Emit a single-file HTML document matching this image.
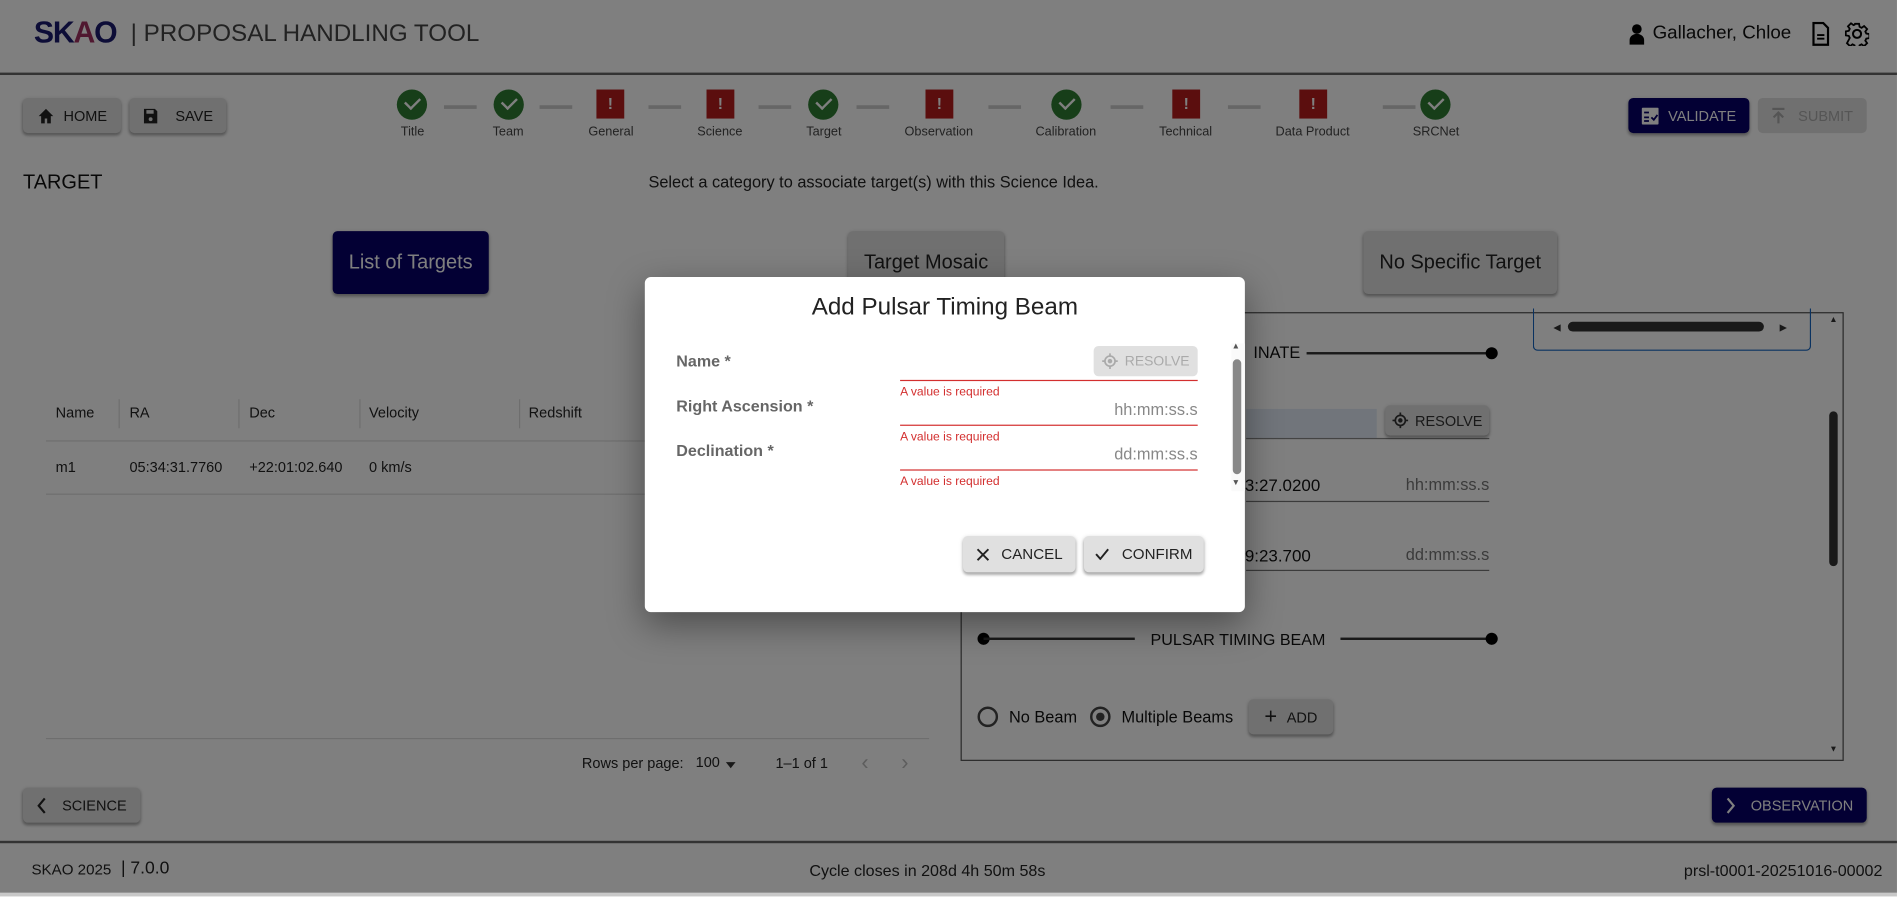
<!DOCTYPE html>
<html><head><meta charset="utf-8">
<style>
*{box-sizing:border-box;margin:0;padding:0}
html,body{width:1897px;height:897px;overflow:hidden;background:#fff;font-family:"Liberation Sans",sans-serif}
#w{position:absolute;left:0;top:0;width:1568px;height:741px;transform:scale(1.2098);transform-origin:0 0;background:#fff;overflow:hidden}
.a{position:absolute}
.btn{position:absolute;background:#e0e0e0;border-radius:4px;box-shadow:0 2px 2px rgba(0,0,0,.25),0 1px 4px rgba(0,0,0,.15);font-size:12px;color:#222;display:flex;align-items:center;justify-content:center;gap:8px}
.nav{background:#070068;color:#fff}
.ok{position:absolute;width:25px;height:25px;border-radius:50%;background:#2e7d32;top:74px}
.ok::after{content:"";position:absolute;left:7px;top:6px;width:10px;height:6px;border-left:2px solid #fff;border-bottom:2px solid #fff;transform:rotate(-45deg)}
.er{position:absolute;width:23px;height:24px;background:#b71c1c;top:74px;color:#fff;font-weight:bold;font-size:13px;text-align:center;line-height:24px}
.sl{position:absolute;top:103px;font-size:10.5px;color:#444;transform:translateX(-50%);white-space:nowrap}
.cn{position:absolute;top:87px;height:3px;background:#ccc}
.t{position:absolute;font-size:12px;color:#222;white-space:nowrap}
.lab{position:absolute;font-size:13.3px;font-weight:bold;color:#666;left:26px}
.ln{position:absolute;left:211px;width:246px;height:1px;background:#d32f2f}
.err{position:absolute;left:211px;font-size:10px;color:#d32f2f}
.ph{position:absolute;right:39px;font-size:13.5px;color:#888}
</style></head><body><div id="w">
<!-- header -->
<div class="a" style="left:28px;top:13px;font-size:25px;font-weight:900;color:#1a1a6e;letter-spacing:-1px">SK<span style="color:#a03060">A</span>O</div>
<div class="a" style="left:108px;top:17px;font-size:20px;color:#444">| PROPOSAL HANDLING TOOL</div>
<div class="a" style="left:0;top:60px;width:1568px;height:2px;background:#666"></div>
<svg class="a" style="left:1346px;top:19px" width="14" height="18" viewBox="0 0 14 18"><circle cx="7" cy="5" r="4" fill="#000"/><path d="M1 18v-4c0-3 3-5 6-5s6 2 6 5v4z" fill="#000"/></svg>
<div class="a" style="left:1366px;top:19px;font-size:15.5px;color:#111">Gallacher, Chloe</div>
<svg class="a" style="left:1497px;top:18px" width="16" height="20" viewBox="0 0 16 20"><path d="M2 1h8l4 4v14H2z" fill="none" stroke="#000" stroke-width="1.8"/><path d="M5 11h6M5 14h6" stroke="#000" stroke-width="1.5"/></svg>
<svg class="a" style="left:1525px;top:18px" width="20" height="20" viewBox="0 0 24 24"><path d="M12 8a4 4 0 1 0 0 8 4 4 0 0 0 0-8z" fill="none" stroke="#000" stroke-width="2"/><path d="M10 2h4l.5 3 2 1 2.5-1.8 3 3-1.8 2.5 1 2 3 .5v4l-3 .5-1 2 1.8 2.5-3 3-2.5-1.8-2 1-.5 3h-4l-.5-3-2-1-2.5 1.8-3-3L4.8 16l-1-2-3-.5v-4l3-.5 1-2L3 4.5l3-3L8.5 3.3l1-.3z" fill="none" stroke="#000" stroke-width="1.8"/></svg>
<!-- toolbar -->
<div class="btn" style="left:19px;top:81px;width:81px;height:29px"><svg width="14" height="14" viewBox="0 0 14 14"><path d="M7 1L1 7h2v6h3V9h2v4h3V7h2z" fill="#222"/></svg>HOME</div>
<div class="btn" style="left:107px;top:81px;width:80px;height:29px;gap:14px"><svg width="13" height="14" viewBox="0 0 13 14"><path d="M1 1h9l2 2v10H1z" fill="#222"/><rect x="3" y="2" width="6" height="3" fill="#e0e0e0"/><circle cx="6.5" cy="9.5" r="1.6" fill="#e0e0e0"/></svg>SAVE</div>
<div class="ok" style="left:328px"></div><div class="sl" style="left:341px">Title</div>
<div class="cn" style="left:367px;width:27px"></div>
<div class="ok" style="left:408px"></div><div class="sl" style="left:420px">Team</div>
<div class="cn" style="left:446px;width:27px"></div>
<div class="er" style="left:493px">!</div><div class="sl" style="left:505px">General</div>
<div class="cn" style="left:536px;width:27px"></div>
<div class="er" style="left:584px">!</div><div class="sl" style="left:595px">Science</div>
<div class="cn" style="left:627px;width:27px"></div>
<div class="ok" style="left:668px"></div><div class="sl" style="left:681px">Target</div>
<div class="cn" style="left:708px;width:27px"></div>
<div class="er" style="left:765px">!</div><div class="sl" style="left:776px">Observation</div>
<div class="cn" style="left:817px;width:27px"></div>
<div class="ok" style="left:869px"></div><div class="sl" style="left:881px">Calibration</div>
<div class="cn" style="left:918px;width:27px"></div>
<div class="er" style="left:969px">!</div><div class="sl" style="left:980px">Technical</div>
<div class="cn" style="left:1015px;width:27px"></div>
<div class="er" style="left:1074px">!</div><div class="sl" style="left:1085px">Data Product</div>
<div class="cn" style="left:1143px;width:27px"></div>
<div class="ok" style="left:1174px"></div><div class="sl" style="left:1187px">SRCNet</div>
<div class="btn nav" style="left:1346px;top:81px;width:100px;height:29px;gap:8px"><svg width="14" height="14" viewBox="0 0 14 14"><rect x="0" y="0" width="14" height="14" rx="1" fill="#fff"/><path d="M2 4h4M2 8h4M2 11h4M8 8l2 2 3-4" stroke="#070068" stroke-width="1.5" fill="none"/></svg>VALIDATE</div>
<div class="btn" style="left:1453px;top:81px;width:90px;height:29px;box-shadow:none;color:#aaa;gap:10px"><svg width="12" height="14" viewBox="0 0 12 14"><path d="M1 1h10M6 13V4M2 8l4-4 4 4" stroke="#aaa" stroke-width="1.8" fill="none"/></svg>SUBMIT</div>
<!-- title row -->
<div class="a" style="left:19px;top:142px;font-size:16.5px;color:#111">TARGET</div>
<div class="a" style="left:536px;top:143px;font-size:13.5px;color:#222">Select a category to associate target(s) with this Science Idea.</div>
<div class="btn nav" style="left:275px;top:191px;width:129px;height:52px;font-size:16.5px">List of Targets</div>
<div class="btn" style="left:701px;top:191px;width:129px;height:52px;font-size:16.5px">Target Mosaic</div>
<div class="btn" style="left:1127px;top:191px;width:160px;height:52px;font-size:16.5px">No Specific Target</div>
<!-- table -->
<div class="t" style="left:46px;top:334px">Name</div><div class="t" style="left:107px;top:334px">RA</div><div class="t" style="left:206px;top:334px">Dec</div><div class="t" style="left:305px;top:334px">Velocity</div><div class="t" style="left:437px;top:334px">Redshift</div>
<div class="a" style="left:98px;top:330px;width:1px;height:24px;background:#ddd"></div>
<div class="a" style="left:197px;top:330px;width:1px;height:24px;background:#ddd"></div>
<div class="a" style="left:297px;top:330px;width:1px;height:24px;background:#ddd"></div>
<div class="a" style="left:429px;top:330px;width:1px;height:24px;background:#ddd"></div>
<div class="a" style="left:38px;top:364px;width:730px;height:1px;background:#ddd"></div>
<div class="t" style="left:46px;top:379px">m1</div><div class="t" style="left:107px;top:379px">05:34:31.7760</div><div class="t" style="left:206px;top:379px">+22:01:02.640</div><div class="t" style="left:305px;top:379px">0 km/s</div>
<div class="a" style="left:38px;top:408px;width:730px;height:1px;background:#ddd"></div>
<div class="a" style="left:38px;top:610px;width:730px;height:1px;background:#ddd"></div>
<div class="t" style="left:481px;top:624px">Rows per page:</div><div class="t" style="left:575px;top:623px">100</div>
<div class="a" style="left:600px;top:630px;border:4px solid transparent;border-top:5px solid #333"></div>
<div class="t" style="left:641px;top:624px">1–1 of 1</div>
<div class="t" style="left:712px;top:620px;color:#bbb;font-size:18px">‹</div><div class="t" style="left:745px;top:620px;color:#bbb;font-size:18px">›</div>
<!-- right panel -->
<div class="a" style="left:794px;top:258px;width:730px;height:371px;border:1px solid #555"></div>
<div class="a" style="left:1267px;top:255px;width:230px;height:35px;border:1px solid #1565c0;border-top:none;border-radius:0 0 4px 4px"></div>
<div class="a" style="left:1296px;top:266px;width:162px;height:8px;border-radius:4px;background:#333"></div>
<div class="a" style="left:1284px;top:266px;font-size:8px;color:#333">◀</div><div class="a" style="left:1471px;top:266px;font-size:8px;color:#333">▶</div>
<div class="a" style="left:1036px;top:284px;font-size:13.5px;color:#111">INATE</div>
<div class="a" style="left:1080px;top:291px;width:150px;height:2px;background:#333"></div><div class="a" style="left:1228px;top:287px;width:10px;height:10px;border-radius:50%;background:#000"></div>
<div class="a" style="left:1030px;top:338px;width:108px;height:24px;background:#e3eaf7"></div>
<div class="a" style="left:1030px;top:362px;width:201px;height:1px;background:#888"></div>
<div class="btn" style="left:1145px;top:335px;width:86px;height:25px;font-size:12px;color:#333;gap:6px"><svg width="13" height="13" viewBox="0 0 14 14"><circle cx="7" cy="7" r="4.5" fill="none" stroke="#333" stroke-width="1.5"/><circle cx="7" cy="7" r="2" fill="#333"/><path d="M7 0v2.5M7 11.5V14M0 7h2.5M11.5 7H14" stroke="#333" stroke-width="1.5"/></svg>RESOLVE</div>
<div class="a" style="left:1029px;top:393px;font-size:14px;color:#111">3:27.0200</div><div class="a" style="right:337px;top:393px;font-size:13.5px;color:#777">hh:mm:ss.s</div>
<div class="a" style="left:1030px;top:414px;width:201px;height:1px;background:#777"></div>
<div class="a" style="left:1029px;top:451px;font-size:14px;color:#111">9:23.700</div><div class="a" style="right:337px;top:451px;font-size:13.5px;color:#777">dd:mm:ss.s</div>
<div class="a" style="left:1030px;top:471px;width:201px;height:1px;background:#777"></div>
<div class="a" style="left:808px;top:523px;width:10px;height:10px;border-radius:50%;background:#000"></div><div class="a" style="left:813px;top:527px;width:125px;height:2px;background:#333"></div>
<div class="a" style="left:951px;top:521px;font-size:13.3px;color:#111">PULSAR TIMING BEAM</div>
<div class="a" style="left:1108px;top:527px;width:125px;height:2px;background:#333"></div><div class="a" style="left:1228px;top:523px;width:10px;height:10px;border-radius:50%;background:#000"></div>
<div class="a" style="left:808px;top:584px;width:17px;height:17px;border-radius:50%;border:2px solid #444"></div>
<div class="a" style="left:834px;top:585px;font-size:13.5px;color:#111">No Beam</div>
<div class="a" style="left:901px;top:584px;width:17px;height:17px;border-radius:50%;border:2px solid #444"></div><div class="a" style="left:906px;top:589px;width:7px;height:7px;border-radius:50%;background:#444"></div>
<div class="a" style="left:927px;top:585px;font-size:13.5px;color:#111">Multiple Beams</div>
<div class="btn" style="left:1032px;top:578px;width:70px;height:29px;font-size:12px"><span style="font-size:18px">+</span>ADD</div>
<div class="a" style="left:1512px;top:340px;width:7px;height:128px;border-radius:4px;background:#333"></div>
<div class="a" style="left:1512px;top:261px;font-size:7px;color:#333">▲</div><div class="a" style="left:1512px;top:616px;font-size:7px;color:#333">▼</div>
<!-- bottom nav -->
<div class="btn" style="left:19px;top:651px;width:97px;height:29px;gap:12px"><svg width="9" height="14" viewBox="0 0 9 14"><path d="M7 1L2 7l5 6" stroke="#222" stroke-width="1.8" fill="none"/></svg>SCIENCE</div>
<div class="btn nav" style="left:1415px;top:651px;width:128px;height:29px;gap:12px"><svg width="9" height="14" viewBox="0 0 9 14"><path d="M2 1l5 6-5 6" stroke="#fff" stroke-width="1.8" fill="none"/></svg>OBSERVATION</div>
<!-- footer -->
<div class="a" style="left:0;top:695px;width:1568px;height:2px;background:#666"></div>
<div class="a" style="left:26px;top:712px;font-size:12.5px;color:#222">SKAO 2025</div>
<div class="a" style="left:100px;top:710px;font-size:14.5px;color:#222">| 7.0.0</div>
<div class="a" style="left:669px;top:712px;font-size:13.3px;color:#222">Cycle closes in 208d 4h 50m 58s</div>
<div class="a" style="right:12px;top:712px;font-size:13.3px;color:#222">prsl-t0001-20251016-00002</div>
<!-- overlay -->
<div class="a" style="left:0;top:0;width:1568px;height:738px;background:rgba(0,0,0,.5)"></div>
<div class="a" style="left:0;top:738px;width:1568px;height:3px;background:#c8c8c8"></div>
<!-- dialog -->
<div class="a" style="left:533px;top:229px;width:496px;height:277px;background:#fff;border-radius:5px;box-shadow:0 10px 30px rgba(0,0,0,.4)">
 <div class="a" style="left:0;top:14px;width:496px;text-align:center;font-size:20px;color:#222">Add Pulsar Timing Beam</div>
 <div class="lab" style="top:62px">Name *</div>
 <div class="lab" style="top:99px">Right Ascension *</div>
 <div class="lab" style="top:136px">Declination *</div>
 <div class="btn" style="left:371px;top:57px;width:86px;height:25px;box-shadow:none;color:#aaa;font-size:11.5px;gap:6px"><svg width="13" height="13" viewBox="0 0 14 14"><circle cx="7" cy="7" r="4.5" fill="none" stroke="#aaa" stroke-width="1.5"/><circle cx="7" cy="7" r="2" fill="#aaa"/><path d="M7 0v2.5M7 11.5V14M0 7h2.5M11.5 7H14" stroke="#aaa" stroke-width="1.5"/></svg>RESOLVE</div>
 <div class="ln" style="top:85px"></div><div class="err" style="top:90px">A value is required</div>
 <div class="ph" style="top:102px">hh:mm:ss.s</div>
 <div class="ln" style="top:122px"></div><div class="err" style="top:127px">A value is required</div>
 <div class="ph" style="top:139px">dd:mm:ss.s</div>
 <div class="ln" style="top:159px"></div><div class="err" style="top:164px">A value is required</div>
 <div class="a" style="left:485px;top:55px;width:11px;height:122px;background:#fafafa"></div>
 <div class="a" style="left:486px;top:68px;width:7px;height:95px;border-radius:4px;background:#888"></div>
 <div class="a" style="left:485px;top:54px;font-size:7px;color:#555">▲</div><div class="a" style="left:485px;top:167px;font-size:7px;color:#555">▼</div>
 <div class="btn" style="left:263px;top:214px;width:93px;height:30px;gap:10px;font-size:12.5px"><svg width="11" height="11" viewBox="0 0 11 11"><path d="M1 1l9 9M10 1l-9 9" stroke="#222" stroke-width="1.6"/></svg>CANCEL</div>
 <div class="btn" style="left:363px;top:214px;width:99px;height:30px;gap:10px;font-size:12.5px"><svg width="12" height="10" viewBox="0 0 12 10"><path d="M1 5l3.5 4L11 1" stroke="#222" stroke-width="1.6" fill="none"/></svg>CONFIRM</div>
</div>
</div></body></html>
